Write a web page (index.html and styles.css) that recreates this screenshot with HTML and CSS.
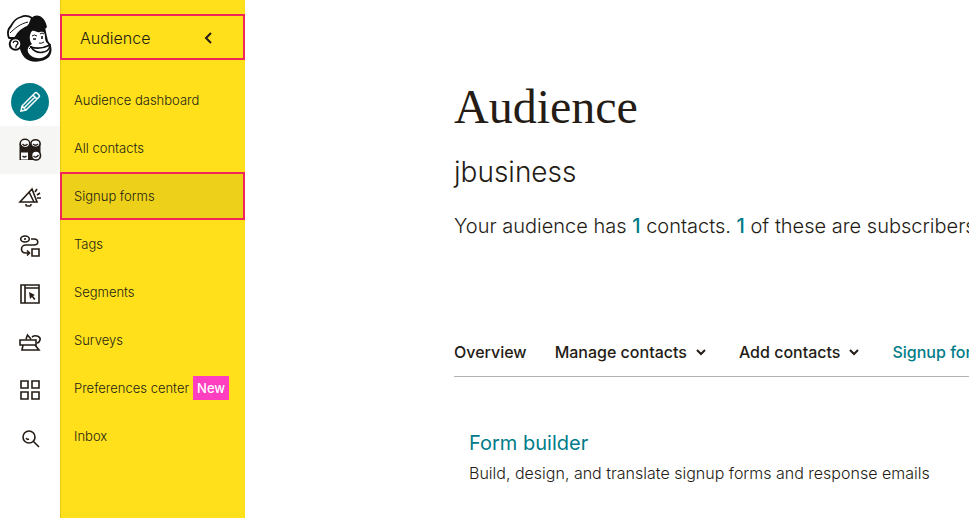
FILE: index.html
```html
<!DOCTYPE html>
<html lang="en">
<head>
<meta charset="utf-8">
<title>Audience</title>
<link rel="stylesheet" href="styles.css">
</head>
<body>
<div class="app">
  <nav class="rail" aria-label="Main">
    <a class="logo" href="#" aria-label="Home">
      <svg width="46" height="50" viewBox="0 0 46 50">
        <path d="M21 11L38 13C39 18 40 23 41 27C45 31 46 38 42 43C36 49 23 49 18 44C15 41 14 38 13 35L8 25C11 18 15 14 21 11Z" fill="#111"/>
        <path d="M2 24C0 19 1 15 4 12C6 8 10 4 14 3C18 1 22 2 25 4L22 12C16 14 11 18 8 24Z" fill="#fff" stroke="#111" stroke-width="1.800" stroke-linejoin="round"/>
        <path d="M3 19C8 14 13 10 21 8" fill="none" stroke="#111" stroke-width="1"/>
        <path d="M20 12C24 9 23 4 27 2C33 0 38 4 40 13C38 16 35 15 32 14C28 12 24 12 20 12Z" fill="#111"/>
        <circle cx="8.500" cy="30" r="5.800" fill="#fff" stroke="#111" stroke-width="2"/>
        <path d="M6 29C7 26 11 27 11 29C11 31 8 31 9 34" fill="none" stroke="#111" stroke-width="1.300"/>
        <path d="M25 30C22 27 22 20 25 17C28 16 30 19 33 18C37 17 38 19 38 23C38 27 39 28 41 30C44 35 42 41 37 43C31 46 23 43 21 38C20 34 22 32 25 30Z" fill="#fff"/>
        <path d="M24 33C30 35 37 34 43 31C42 40 29 41 24 33Z" fill="#fff" stroke="#111" stroke-width="1.600"/>
        <path d="M22 35L25 32M25 22Q27 20 30 22M33 20Q35 18 37 20M32 29Q34 30 37 28" fill="none" stroke="#111" stroke-width="1"/>
        <path d="M26 25H29M35 22V25" stroke="#111" stroke-width="1.600"/>
      </svg>
    </a>
    <a class="rail-item" href="#" aria-label="Create">
      <span class="create">
        <svg width="22" height="22" viewBox="0 0 22 22" fill="none" stroke="#fff" stroke-width="1.500"><path d="M2 20L3 15L16 2Q17 1 18 2L20 4Q21 5 20 6L7 19ZM3 15L7 19M14 4L18 8M5 17L16 6"/></svg>
      </span>
    </a>
    <a class="rail-item current" href="#" aria-label="Audience">
      <svg width="24" height="24" viewBox="0 0 24 24">
        <path d="M1.500 6H22.500V18H18V22H1.500Z" fill="#241c15"/>
        <g fill="#fff" stroke="#241c15" stroke-width="1.600"><ellipse cx="7" cy="5.500" rx="4.800" ry="4.200"/><ellipse cx="17.500" cy="5.500" rx="4.600" ry="3.800"/></g>
        <path d="M3 14.500H10V21.500H3Z" fill="#fff"/>
        <circle cx="18" cy="17.500" r="4.500" fill="#fff" stroke="#241c15" stroke-width="1.600"/>
        <path d="M4.500 6Q7 9 9.500 6M15 6Q17.500 8.500 20 6M4.500 18Q6.500 20 8.500 18M15.500 18Q18 20.500 20.500 17" fill="none" stroke="#241c15" stroke-width="1.300"/>
      </svg>
    </a>
    <a class="rail-item" href="#" aria-label="Campaigns">
      <svg class="line" width="24" height="24" viewBox="0 0 24 24"><path d="M14 3L2 16H19ZM11 6L16 16M8 18V19Q8 20 9 20H12Q13 20 13 18M17 6L19 3M19 9L22 7M19 12H23"/></svg>
    </a>
    <a class="rail-item" href="#" aria-label="Automations">
      <svg class="line" width="24" height="24" viewBox="0 0 24 24"><ellipse cx="7" cy="5" rx="4.300" ry="3"/><path d="M7 4V6M13 5H16C21 5 21 11 16 11H8C2 11 2 19 8 19H11M9 16.500L11.500 19L9 21.500M14 15H21V22H14Z"/></svg>
    </a>
    <a class="rail-item" href="#" aria-label="Website">
      <svg class="line" width="24" height="24" viewBox="0 0 24 24"><path d="M3 3H21V21H3ZM7 3V21M7 6H21"/><path d="M11 10L17 13L15 14L17.500 17L16 18L14 15L12 17Z" fill="#241c15" stroke="none"/></svg>
    </a>
    <a class="rail-item" href="#" aria-label="Content studio">
      <svg class="line" width="24" height="24" viewBox="0 0 24 24"><path d="M2 10H18V15H2ZM8 9L9.500 5L13 9M5 15L4 20H21L17 15M14 7C18 4 23 7 22 10Q21 13 19 13"/></svg>
    </a>
    <a class="rail-item" href="#" aria-label="Integrations">
      <svg class="line" width="24" height="24" viewBox="0 0 24 24"><path d="M3 3H10V10H3ZM14 3H21V10H14ZM3 14H10V21H3ZM14 14H21V21H14Z"/></svg>
    </a>
    <a class="rail-item" href="#" aria-label="Search">
      <svg class="line" width="24" height="24" viewBox="0 0 24 24"><circle cx="11" cy="11" r="6"/><path d="M15.500 15.500L21 21M8 12Q9 14 11 13"/></svg>
    </a>
  </nav>
  <aside class="side">
    <button class="side-head" type="button"><span>Audience</span>
      <svg width="8" height="12" viewBox="0 0 8 12" fill="none" stroke="#241c15" stroke-width="2"><path d="M7 1L2 6L7 11"/></svg>
    </button>
    <ul class="side-list">
      <li><a href="#">Audience dashboard</a></li>
      <li><a href="#">All contacts</a></li>
      <li><a class="active" href="#">Signup forms</a></li>
      <li><a href="#">Tags</a></li>
      <li><a href="#">Segments</a></li>
      <li><a href="#">Surveys</a></li>
      <li><a href="#">Preferences center <span class="badge">New</span></a></li>
      <li><a href="#">Inbox</a></li>
    </ul>
  </aside>
  <main class="main">
    <h1>Audience</h1>
    <h2>jbusiness</h2>
    <p class="summary">Your audience has <a href="#">1</a> contacts. <a href="#">1</a> of these are subscribers.</p>
    <nav class="tabs" aria-label="Audience">
      <a href="#">Overview</a>
      <button type="button">Manage contacts <svg width="10" height="8" viewBox="0 0 10 8"><path d="M1 2L5 6L9 2"/></svg></button>
      <button type="button">Add contacts <svg width="10" height="8" viewBox="0 0 10 8"><path d="M1 2L5 6L9 2"/></svg></button>
      <a class="selected" href="#">Signup forms</a>
    </nav>
    <section class="option">
      <h3><a href="#">Form builder</a></h3>
      <p>Build, design, and translate signup forms and response emails</p>
    </section>
  </main>
</div>
</body>
</html>
```
FILE: styles.css
```css
* { box-sizing: border-box; }
body {
  margin: 0;
  background: #fff;
  color: #241c15;
  font-family: Inter, "Liberation Sans", sans-serif;
}
a { color: inherit; text-decoration: none; }
button {
  border: 0;
  padding: 0;
  background: none;
  color: inherit;
  font: inherit;
}
h1, h2, h3, p, ul { margin: 0; padding: 0; font-weight: 400; }
svg { display: block; flex: none; }
.app { display: flex; min-height: 100vh; overflow: hidden; }

.rail { flex: 0 0 60px; }
.logo { display: block; padding: 14px 0 14px 7px; }
.rail-item { display: flex; align-items: center; justify-content: center; height: 48px; }
.current { background: #f6f6f4; }
.create {
  display: flex;
  align-items: center;
  justify-content: center;
  width: 38px;
  height: 38px;
  border-radius: 50%;
  background: #007c89;
}
.line { fill: none; stroke: #241c15; stroke-width: 1.6px; }

.side {
  flex: 0 0 185px;
  padding-top: 14px;
  background: #ffe01b;
  box-shadow: inset 1px 0 #e6ca18;
}
.side-head {
  display: flex;
  align-items: center;
  justify-content: space-between;
  width: 100%;
  height: 46px;
  padding: 2px 31px 0 18px;
  border: 2px solid #f0265a;
  background: #ffe01b;
  font-size: 16px;
  font-weight: 300;
}
.side-list { padding-top: 16px; list-style: none; }
.side-list a {
  display: flex;
  align-items: center;
  gap: 4px;
  height: 48px;
  padding-left: 14px;
  font-size: 13px;
  font-weight: 300;
  white-space: nowrap;
}
.side-list .active {
  padding-left: 12px;
  border: 2px solid #f0265a;
  background: #edd019;
}
.side-list .badge {
  padding: 0 4px;
  background: #ff3ec0;
  color: #fff;
  line-height: 24px;
  font-weight: 500;
}

.main {
  flex: 1;
  min-width: 0;
  padding: 80px 0 32px 209px;
  white-space: nowrap;
}
h1 { font: 48px/54px "Liberation Serif", serif; }
h2 { margin-top: 20px; font-size: 28px; line-height: 36px; font-weight: 300; }
.summary { margin-top: 20px; font-size: 20px; line-height: 32px; font-weight: 300; }
.summary a { color: #007c89; font-weight: 500; }
.tabs {
  display: flex;
  gap: 28px;
  margin-top: 98px;
  padding-bottom: 12px;
  border-bottom: 1px solid #b5b3b1;
  font-size: 16px;
  line-height: 24px;
  font-weight: 500;
}
.tabs button { display: flex; align-items: center; gap: 9px; margin-right: 5px; }
.tabs svg { fill: none; stroke: #241c15; stroke-width: 2px; }
.selected { color: #007c89; }
.option { padding: 50px 15px 0; }
h3 { color: #007c89; font-size: 20px; line-height: 32px; }
.option p { font-size: 16px; line-height: 28px; font-weight: 300; }
```
